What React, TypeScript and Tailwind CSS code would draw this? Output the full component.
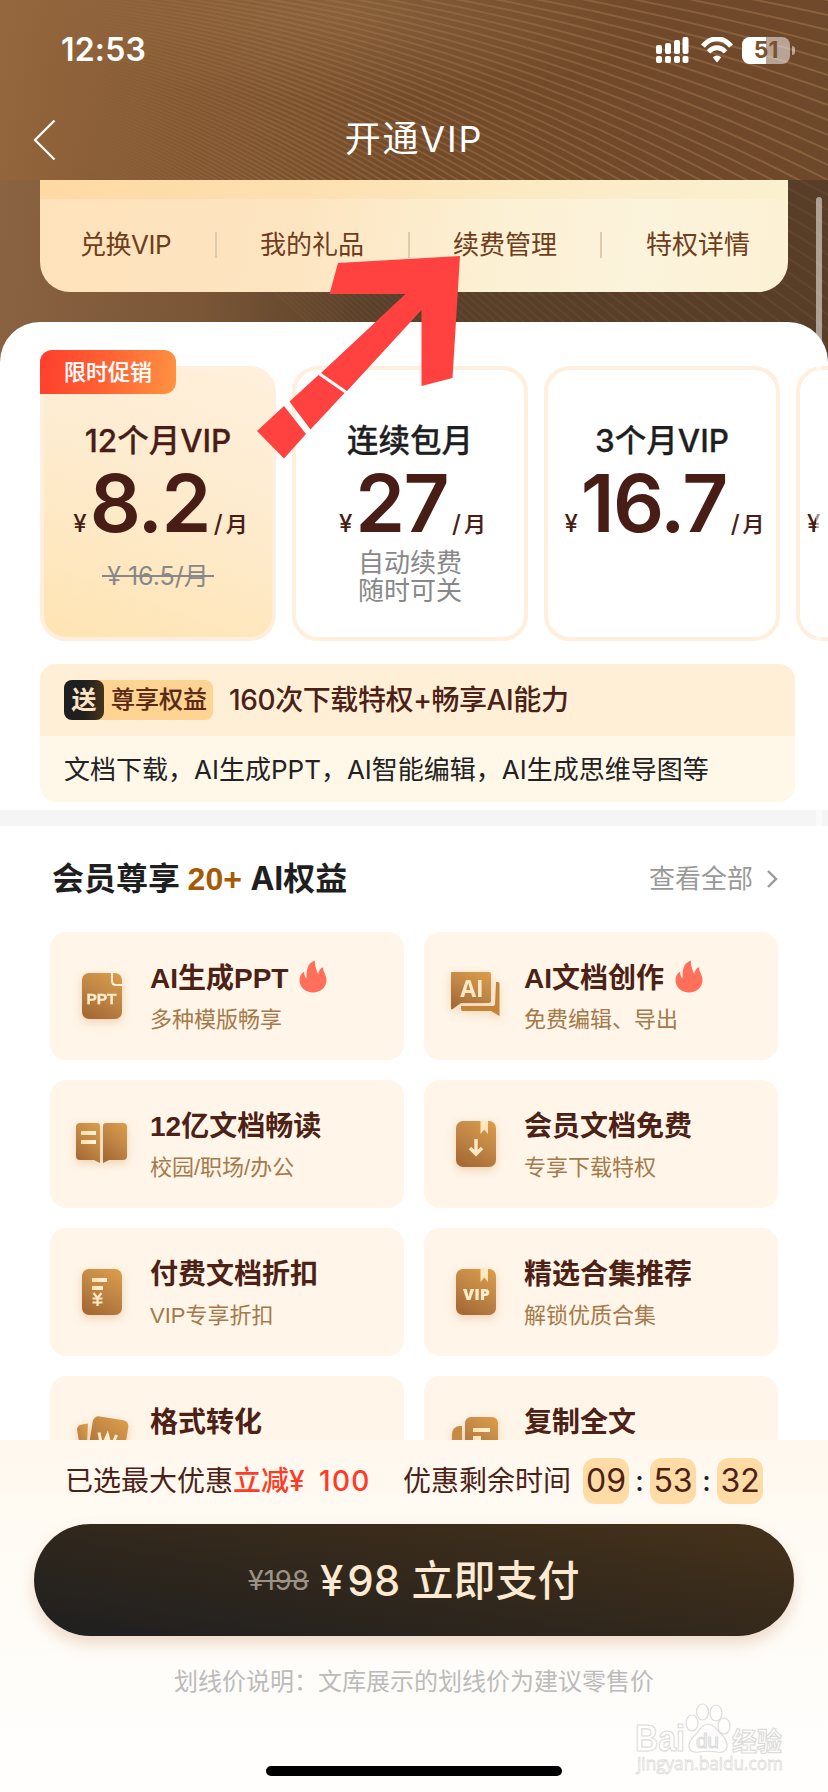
import React from "react";

const WAVES = Array.from({ length: 78 }, (_, i) => i - 12);

function wavePath(k: number) {
  const a = -30 + 2.6 * k;
  const b = -0.019 + 0.00403 * k;
  const c = 0.0002855 + 0.00001322 * k;
  const end = a + b * 828 + c * 828 * 828;
  return `M0 ${a.toFixed(1)} Q414 ${(a + b * 414).toFixed(1)} 828 ${end.toFixed(1)}`;
}

function Waves({ id, offset, strength }: { id: string; offset: number; strength: number }) {
  return (
    <svg className="absolute inset-0 h-full w-full" fill="none" aria-hidden="true">
      <defs>
        <linearGradient id={id} gradientUnits="userSpaceOnUse" x1="0" y1="0" x2="828" y2="0">
          <stop offset="0.08" stopColor="#b88a5c" stopOpacity="0" />
          <stop offset="0.35" stopColor="#b08458" stopOpacity={0.3 * strength} />
          <stop offset="1" stopColor="#b08458" stopOpacity={0.42 * strength} />
        </linearGradient>
      </defs>
      <g transform={`translate(0 ${-offset})`} stroke={`url(#${id})`} strokeWidth="1.9">
        {WAVES.map((k) => (
          <path key={k} d={wavePath(k)} />
        ))}
      </g>
    </svg>
  );
}

function StatusBar() {
  return (
    <div className="relative flex h-[100px] items-center justify-between pr-[33px] pl-[61px] text-white">
      <span className="text-[32px] leading-none font-semibold tracking-[0.2px]">12:53</span>
      <div className="flex items-center gap-[11px]">
        <svg width="34" height="28" viewBox="0 0 34 28" fill="#fff">
          <rect x="0" y="9" width="6" height="9" rx="2" />
          <rect x="9" y="7" width="6" height="11" rx="2" />
          <rect x="18" y="4" width="6" height="14" rx="2" />
          <rect x="26.5" y="1" width="6" height="17" rx="2" />
          <rect x="0" y="20" width="6" height="7" rx="2" />
          <rect x="9" y="20" width="6" height="7" rx="2" />
          <rect x="18" y="20" width="6" height="7" rx="2" />
          <rect x="26.5" y="20" width="6" height="7" rx="2" />
        </svg>
        <svg width="32" height="26" viewBox="0 0 32 26" fill="none" stroke="#fff">
          <path d="M2 9.2C10-0.6 22-0.6 30 9.2" strokeWidth="5" />
          <path d="M7.5 14.8C12.5 9.4 19.500 9.4 24.500 14.8" strokeWidth="4.800" />
          <path d="M16 25.500L11.800 20.600C14 17.800 18 17.800 20.200 20.600Z" fill="#fff" stroke="none" />
        </svg>
        <div className="-ml-0.5 flex items-center gap-[2px]">
          <div className="relative flex h-[27px] w-[48px] items-center justify-center overflow-hidden rounded-[8px] bg-white/50">
            <div className="absolute inset-y-0 left-0 w-6 bg-white" />
            <span className="relative text-[23px] leading-none font-bold text-[#7a5330]">51</span>
          </div>
          <div className="h-[9px] w-[3px] rounded-r-full bg-white/50" />
        </div>
      </div>
    </div>
  );
}

function Header() {
  return (
    <header className="relative h-[180px] shrink-0 overflow-hidden bg-[linear-gradient(100deg,#95683f_0%,#855932_22%,#734b2a_50%,#6e482a_100%)]">
      <div className="absolute inset-0 bg-[radial-gradient(ellipse_320px_90px_at_340px_10px,rgba(160,120,80,0.4),transparent)]" />
      <Waves id="wave-top" offset={0} strength={1} />
      <StatusBar />
      <div className="relative flex h-[78px] items-center justify-center">
        <button className="absolute top-[19px] left-[33px]">
          <svg width="23" height="42" viewBox="0 0 23 42" fill="none" stroke="#fff" strokeWidth="2.200">
            <path d="M21.500 1.500L2 21L21.500 40.500" />
          </svg>
        </button>
        <h1 className="text-[36px] leading-none font-normal tracking-[1.8px] text-white">开通VIP</h1>
      </div>
    </header>
  );
}

function MemberLinks() {
  const links = ["兑换VIP", "我的礼品", "续费管理", "特权详情"];
  return (
    <div className="relative mx-10 h-[112px] overflow-hidden rounded-b-[30px] bg-[linear-gradient(100deg,#fee2bb_0%,#fde5c1_35%,#fcf0d3_60%,#fcf3dc_80%,#fcf1d4_100%)]">
      <div className="h-[19px] bg-[linear-gradient(90deg,#fed9a4_0%,#fee0b0_35%,#fbecc6_70%,#faf1cf_100%)]" />
      <div className="flex h-[92px] items-center justify-between pr-[38px] pl-[40px]">
        {links.map((text, i) => (
          <React.Fragment key={text}>
            {i > 0 && <i className="h-[26px] w-[2px] bg-[#dfcaab]" />}
            <span className={"text-[26px] leading-none text-[#6f3d1b] " + (i === 0 ? "tracking-[-0.5px]" : "")}>{text}</span>
          </React.Fragment>
        ))}
      </div>
    </div>
  );
}

function PlanCard({ title, price, active, children }: { title: string; price: string; active?: boolean; children?: React.ReactNode }) {
  return (
    <div
      className={
        "relative flex h-[275px] w-[236px] shrink-0 flex-col items-center rounded-[26px] border-4 border-[#ffefdc] " +
        (active ? "bg-[linear-gradient(200deg,#fff0dc_0%,#feecd0_40%,#ffe4b3_100%)]" : "bg-white")
      }
    >
      {active && (
        <div className="absolute -top-5 -left-1 flex h-11 w-[136px] items-center justify-center rounded-xl rounded-bl-none bg-[linear-gradient(100deg,#ff3d2c_0%,#ff6434_50%,#ff9442_100%)] text-[22px] leading-none font-medium text-white [-webkit-text-stroke:0.2px]">
          限时促销
        </div>
      )}
      <div
        className={
          "mt-[54px] text-[31.500px] leading-[34px] font-medium whitespace-nowrap [-webkit-text-stroke:0.3px] " +
          (active ? "text-[#471d16]" : "text-[#1f1f1f]")
        }
      >
        {title}
      </div>
      <div className="mt-[10px] flex h-[70px] items-baseline pl-[5px] whitespace-nowrap text-[#471d16]">
        <span className="mr-[3px] text-[24px] leading-none font-medium">¥</span>
        <span className="text-[80px] leading-[70px] font-semibold tracking-[-1.6px]">{price}</span>
        <span className="ml-1 text-[24px] leading-none font-medium">/</span>
        <span className="ml-[3px] text-[22px] leading-none font-medium [-webkit-text-stroke:0.2px]">月</span>
      </div>
      {children}
    </div>
  );
}

function Plans() {
  return (
    <div className="flex gap-4 overflow-hidden pt-[44px] pl-10">
      <PlanCard title="12个月VIP" price="8.2" active>
        <div className="relative mt-[23px] px-[5px] text-[25px] leading-[30px] text-[#888]">
          ¥ 16.5/月
          <i className="absolute inset-x-0 top-[14px] h-[2px] bg-[#888]" />
        </div>
      </PlanCard>
      <PlanCard title="连续包月" price="27">
        <div className="mt-[11px] text-center text-[26px] leading-[28px] text-[#888]">
          自动续费
          <br />
          随时可关
        </div>
      </PlanCard>
      <PlanCard title="3个月VIP" price="16.7" />
      <div className="h-[275px] w-[236px] shrink-0 rounded-[26px] border-4 border-[#ffefdc] pt-[140px] pl-[7px] text-[24px] leading-[28px] font-medium text-[#471d16]">
        ¥
      </div>
    </div>
  );
}

function GiftPanel() {
  return (
    <div className="mt-[23px] ml-10 h-[138px] w-[755px] overflow-hidden rounded-2xl bg-[#fff8e8]">
      <div className="flex h-[72px] items-center bg-[#ffefd6] pl-6">
        <div className="flex h-10 w-[149px] items-center rounded-lg bg-[#ffd391]">
          <div className="flex h-10 w-10 items-center justify-center rounded-lg bg-[linear-gradient(90deg,#1f1f1f_50%,#45341c)] text-[25px] leading-none font-bold text-[#ffe4c4]">送</div>
          <span className="ml-[7px] text-[24px] leading-none font-medium text-[#5a2a17] [-webkit-text-stroke:0.2px]">尊享权益</span>
        </div>
        <span className="ml-[16px] text-[28px] leading-none font-medium tracking-[-0.4px] text-[#4c2116]">160次下载特权+畅享AI能力</span>
      </div>
      <div className="flex h-[67px] items-center pl-6 text-[26px] leading-none whitespace-nowrap text-[#222]">
        文档下载，AI生成PPT，AI智能编辑，AI生成思维导图等
      </div>
    </div>
  );
}

function Gold() {
  return (
    <defs>
      <linearGradient id="gold" x1="0.8" y1="0" x2="0.3" y2="1">
        <stop offset="0" stopColor="#d99a4a" />
        <stop offset="0.5" stopColor="#bf8545" />
        <stop offset="1" stopColor="#a66a34" />
      </linearGradient>
      <linearGradient id="cream" x1="0" y1="0" x2="1" y2="0">
        <stop offset="0" stopColor="#ffe0ae" />
        <stop offset="1" stopColor="#fff4dc" />
      </linearGradient>
    </defs>
  );
}

const icons: Record<string, React.ReactNode> = {
  ppt: (
    <>
      <rect x="6" y="1" width="40" height="46" rx="7" fill="url(#gold)" />
      <path d="M36 1v8q0 4 4 4h6" fill="none" stroke="#fff0d8" strokeWidth="2" />
      <text x="25.5" y="32" textAnchor="middle" fontSize="15.500" fontWeight="700" fontFamily="Liberation Sans" fill="#ffeccb" stroke="#ffeccb" strokeWidth="0.300">PPT</text>
    </>
  ),
  ai: (
    <>
      <path d="M2 0h37a2 2 0 0 1 2 2v27a2 2 0 0 1-2 2H11L2 37.500a1 1 0 0 1-1-1V1a1 1 0 0 1 1-1z" fill="url(#gold)" />
      <path d="M46 10h2a1.500 1.500 0 0 1 1.500 1.500V44L41 39H13a2 2 0 0 1-2-2v-3h32a2 2 0 0 0 2-2z" fill="#c58539" />
      <text x="22" y="24.500" textAnchor="middle" fontSize="23" fontWeight="700" fontFamily="Open Sans" fill="#ffe9c4">AI</text>
    </>
  ),
  book: (
    <>
      <path d="M4 3h17a3 3 0 0 1 3 3v37l-6-3H4a4 4 0 0 1-4-4V7a4 4 0 0 1 4-4z" fill="url(#gold)" />
      <path d="M30 3h17a4 4 0 0 1 4 4v29a4 4 0 0 1-4 4H33l-6 3V6a3 3 0 0 1 3-3z" fill="url(#gold)" />
      <path d="M5 11h15v4H5zM5 20h15v4H5z" fill="url(#cream)" />
    </>
  ),
  down: (
    <>
      <rect x="6" y="1" width="40" height="46" rx="7" fill="url(#gold)" />
      <path d="M30.500 1h7.500v13l-3.750-4.500L30.500 14z" fill="#ffe6bd" />
      <path d="M26 19v14M20 28l6 6 6-6" fill="none" stroke="#ffe9c4" strokeWidth="3.400" />
    </>
  ),
  pay: (
    <>
      <rect x="6" y="1" width="40" height="46" rx="7" fill="url(#gold)" />
      <path d="M16 10h15v4H16zM16 18h11v4H16z" fill="url(#cream)" />
      <path d="M17.500 25l4 5 4-5M21.500 30v8M16.500 30.500h10M16.500 34.500h10" fill="none" stroke="#ffe9c4" strokeWidth="2.200" />
    </>
  ),
  vip: (
    <>
      <rect x="6" y="1" width="40" height="46" rx="7" fill="url(#gold)" />
      <path d="M30.500 1h7.500v13l-3.750-4.500L30.500 14z" fill="#ffe6bd" />
      <text x="26.500" y="32" textAnchor="middle" fontSize="16" fontWeight="800" fontFamily="Open Sans" fill="#ffeccb">VIP</text>
    </>
  ),
  convert: (
    <>
      <path d="M6 8.500L12 7.500 10 47H7L1 14a5 5 0 0 1 5-5.500z" fill="url(#gold)" />
      <rect x="14" y="2" width="36" height="44" rx="6" fill="url(#gold)" transform="rotate(9 32 24)" />
      <path d="M23 16.500L26 31 31.500 19 35 32 40.500 19" fill="none" stroke="#ffeccb" strokeWidth="3" />
    </>
  ),
  copy: (
    <>
      <path d="M12 10v37H6a4 4 0 0 1-4-4V18a8 8 0 0 1 8-8z" fill="#c78a42" />
      <rect x="15" y="1" width="33" height="44" rx="6" fill="url(#gold)" />
      <path d="M23 12h17v4H23zM23 20h8v4h-8z" fill="url(#cream)" />
    </>
  ),
};

const features: { icon: string; title: string; sub?: string; hot?: boolean }[] = [
  { icon: "ppt", title: "AI生成PPT", sub: "多种模版畅享", hot: true },
  { icon: "ai", title: "AI文档创作", sub: "免费编辑、导出", hot: true },
  { icon: "book", title: "12亿文档畅读", sub: "校园/职场/办公" },
  { icon: "down", title: "会员文档免费", sub: "专享下载特权" },
  { icon: "pay", title: "付费文档折扣", sub: "VIP专享折扣" },
  { icon: "vip", title: "精选合集推荐", sub: "解锁优质合集" },
  { icon: "convert", title: "格式转化" },
  { icon: "copy", title: "复制全文" },
];

function Flame() {
  return (
    <svg className="-mt-[6px]" width="28" height="33" viewBox="0 0 28 33" fill="#ff6f59">
      <path d="M15.800 0.500C15.800 6 17.500 10 19.200 14.500C19.600 11 21 8.300 24.200 7.300C23.800 12 27.500 14.500 27.500 20C27.500 27.500 21.500 32.500 14 32.500C6.500 32.500 0.500 27.500 0.500 20C0.500 16.500 2 13.800 5.200 11.500C5.200 14.500 5.600 17 7.700 18.500C7.200 10 8.500 3 15.800 0.500Z" />
    </svg>
  );
}

function Features() {
  return (
    <section>
      <div className="flex h-[105px] items-center justify-between pr-[50px] pl-[52px]">
        <h2 className="text-[32px] leading-none font-bold text-[#1f1f1f]">
          会员尊享 <span className="mr-px font-['Liberation_Sans'] text-[#a65a05]">20+</span> AI权益
        </h2>
        <div className="flex items-center gap-[13px] text-[26px] leading-none text-[#999]">
          查看全部
          <svg width="12" height="18" viewBox="0 0 12 18" fill="none" stroke="#999" strokeWidth="2.400">
            <path d="M2 1l8 8-8 8" />
          </svg>
        </div>
      </div>
      <div className="mt-px grid grid-cols-[354px_354px] gap-5 pl-[50px]">
        {features.map((f) => (
          <div key={f.title} className="flex h-32 items-center rounded-2xl bg-[#fff5e8] pl-[26px] font-['Liberation_Sans','Noto_Sans_CJK_SC',sans-serif]">
            <svg className="-mt-[1px] shrink-0 overflow-visible drop-shadow-[0_3px_4px_rgba(200,130,60,0.3)]" width="52" height="48" viewBox="0 0 52 48">
              <Gold />
              {icons[f.icon]}
            </svg>
            <div className="mt-[6px] ml-[22px] flex flex-col gap-[14px]">
              <div className="flex h-[28px] items-center gap-[11px] text-[28px] leading-none font-bold whitespace-nowrap text-[#4c2116]">
                {f.title}
                {f.hot && <Flame />}
              </div>
              <div className="h-[26px] text-[22px] leading-[26px] whitespace-nowrap text-[#a5794a]">{f.sub}</div>
            </div>
          </div>
        ))}
      </div>
    </section>
  );
}

function Countdown() {
  const parts = ["09", "53", "32"];
  return (
    <div className="ml-[12px] flex items-center">
      {parts.map((p, i) => (
        <React.Fragment key={p}>
          {i > 0 && <span className="w-[21px] text-center text-[28px] leading-none font-medium text-[#222]">:</span>}
          <span className="flex h-[46px] w-[46px] items-center justify-center rounded-xl bg-[#ffdca6] text-[32px] leading-none text-[#4c2116]">{p}</span>
        </React.Fragment>
      ))}
    </div>
  );
}

function Watermark() {
  return (
    <svg className="absolute right-[39px] bottom-[12px]" width="160" height="82" viewBox="0 0 160 82" fill="#fffefd" stroke="#dcdcdc" strokeWidth="1.200">
      <text x="6" y="53" fontSize="36" fontWeight="700" fontFamily="Liberation Sans" textLength="50" lengthAdjust="spacingAndGlyphs">Bai</text>
      <ellipse cx="63" cy="25" rx="6" ry="8" />
      <ellipse cx="73.500" cy="14" rx="6" ry="8" />
      <ellipse cx="87" cy="15" rx="6" ry="8" />
      <ellipse cx="95" cy="28" rx="6" ry="8" />
      <path d="M79 26c6 0 9 6 13 10s7 8 6 13-6 6-10 5-13-1-18 0-10-1-10-6 3-8 7-12 6-10 12-10z" />
      <text x="67" y="50" fontSize="21" fontFamily="Liberation Sans" textLength="23">du</text>
      <text x="103" y="53" fontSize="26" fontWeight="700" fontFamily="Noto Sans CJK SC" textLength="50" lengthAdjust="spacingAndGlyphs">经验</text>
      <text x="8" y="72" fontSize="19" fontFamily="Open Sans" strokeWidth="0.800" textLength="146" lengthAdjust="spacingAndGlyphs">jingyan.baidu.com</text>
    </svg>
  );
}

function PayBar() {
  return (
    <footer className="relative h-[352px] shrink-0 bg-[linear-gradient(180deg,#fff8ee_0%,#fffcf7_45%,#fffefd_100%)]">
      <div className="flex h-[82px] items-center pl-[65px] text-[28px] leading-none whitespace-nowrap text-[#4c2116]">
        <div className="w-[338px]">
          已选最大优惠
          <span className="font-medium text-[#ff3a26]">
            立减<span className="mr-[7px]">¥</span> <span className="tracking-[1.2px]">100</span>
          </span>
        </div>
        <span>优惠剩余时间</span>
        <Countdown />
      </div>
      <button className="mx-[34px] mt-[2px] flex h-[112px] w-[760px] items-center justify-center gap-[11px] rounded-full bg-[linear-gradient(190deg,#46321a_0%,#32281c_50%,#1f1f20_100%)] pt-[2px] text-[#fee9d2] shadow-[0_8px_16px_rgba(200,140,90,0.3)]">
        <span className="text-[27.500px] leading-none text-[#9c9386] line-through">¥198</span>
        <span className="text-[42px] leading-none font-medium whitespace-nowrap">
          <span className="mr-[4px]">¥</span>98 立即支付
        </span>
      </button>
      <p className="mt-[33px] text-center text-[24px] leading-[26px] text-[#bbb]">划线价说明：文库展示的划线价为建议零售价</p>
      <Watermark />
      <div className="absolute bottom-[16px] left-[266px] h-[10px] w-[296px] rounded-full bg-black" />
    </footer>
  );
}

export default function App() {
  return (
    <div className="flex h-[1792px] w-[828px] flex-col overflow-hidden bg-white font-[Inter,'Noto_Sans_CJK_SC',sans-serif]">
      <Header />
      <main className="relative min-h-0 flex-1 overflow-hidden">
        <div className="absolute inset-x-0 top-0 h-[190px] overflow-hidden bg-[linear-gradient(95deg,#8a6342_0%,#7a5636_25%,#5a402a_45%,#583e28_100%)]">
          <Waves id="wave-low" offset={180} strength={0.25} />
        </div>
        <MemberLinks />
        <div className="relative mt-[30px] rounded-t-[40px] bg-white">
          <Plans />
          <GiftPanel />
          <div className="mt-2 h-4 bg-[#f5f5f5]" />
          <Features />
        </div>
        <div className="absolute top-[17px] right-[6px] h-[700px] w-[6px] rounded-full bg-white/50" />
      </main>
      <PayBar />
      <svg className="pointer-events-none absolute top-[250px] left-[250px]" width="220" height="214" viewBox="250 250 220 214" fill="#ff4140">
        <path d="M338 263L460 256L452.500 378L421.500 386V310L347 391L321 373L405.500 294H329.500Z" />
        <path d="M318.500 375L344.500 393L310.500 429.500L289.500 401.500Z" />
        <path d="M284 406L306 434L284 458.500L257 431Z" />
      </svg>
    </div>
  );
}
